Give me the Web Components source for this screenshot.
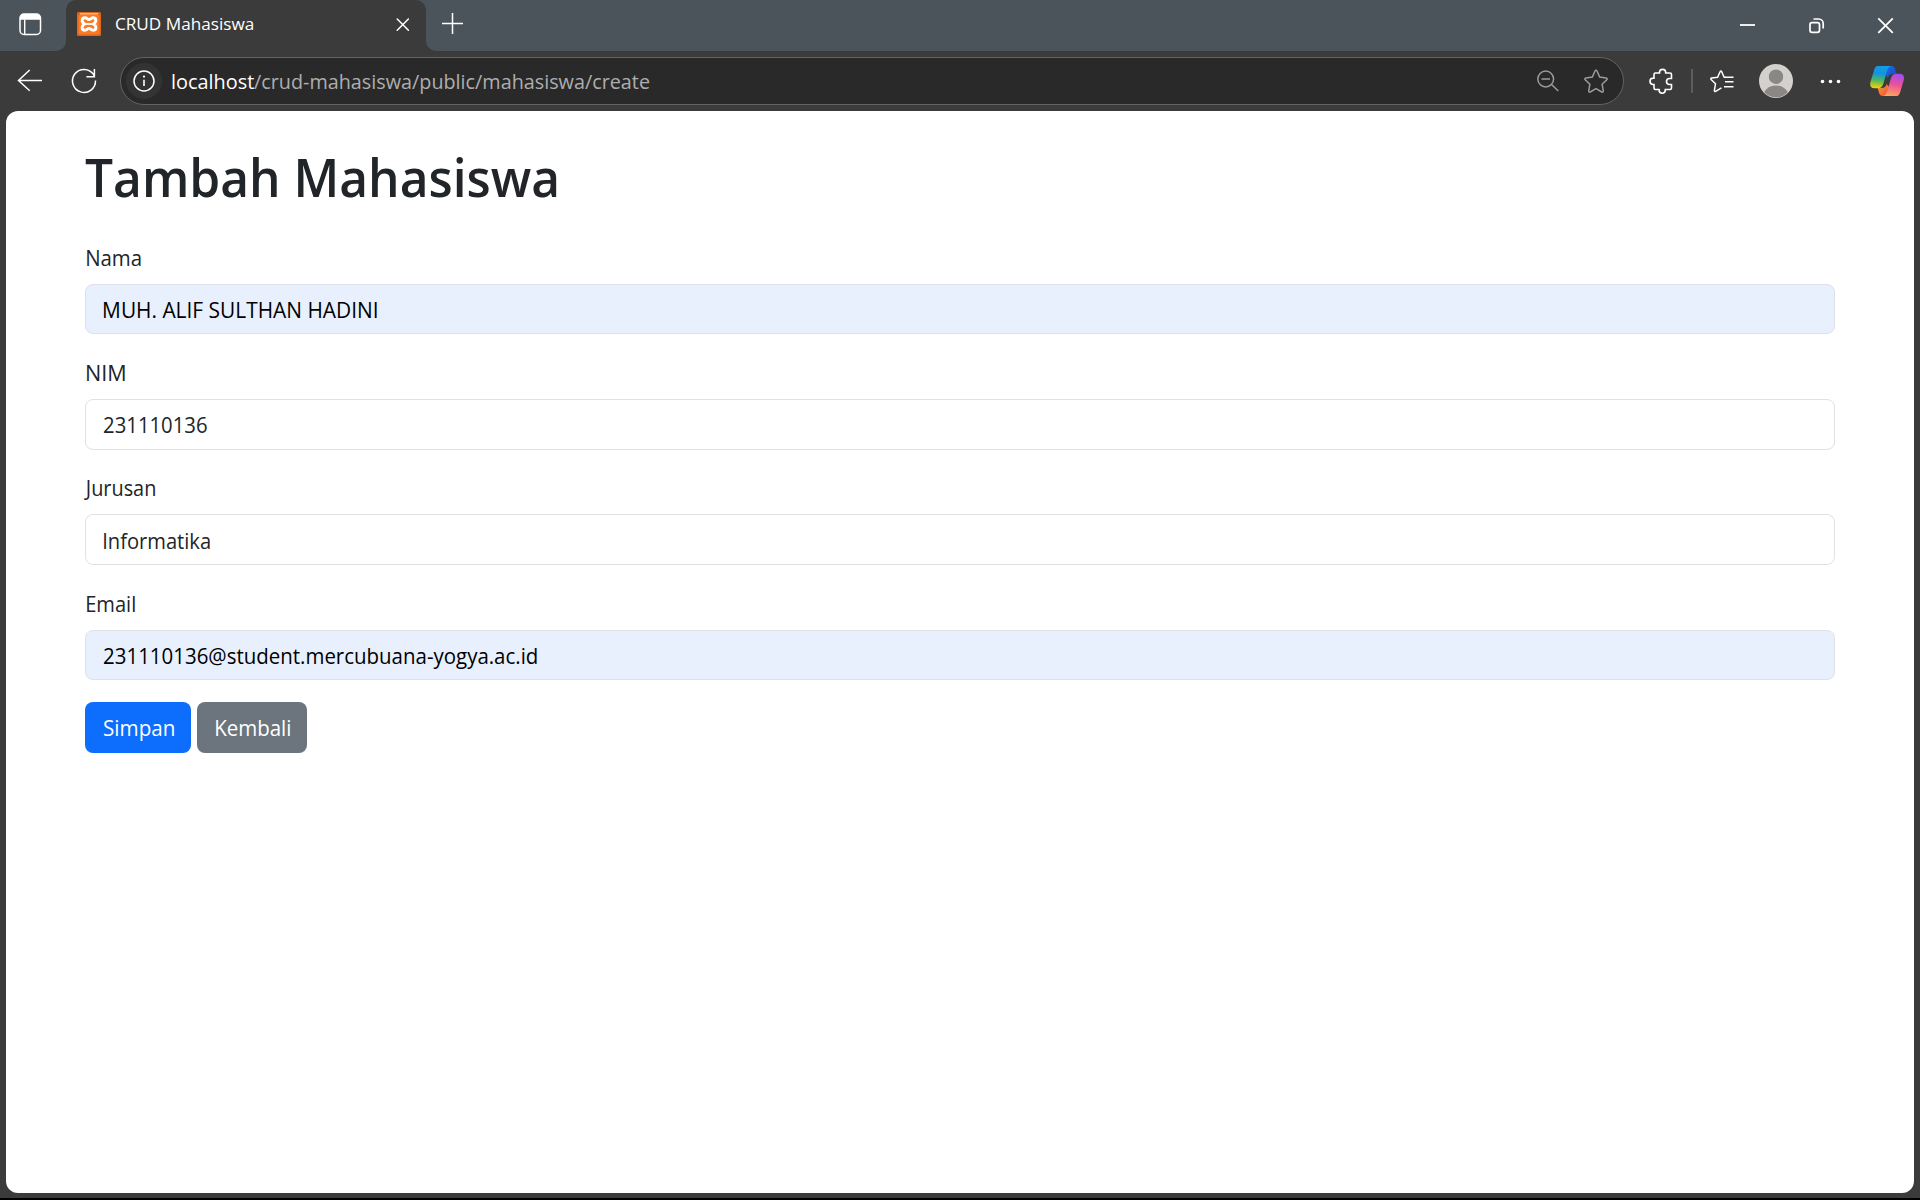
<!DOCTYPE html>
<html lang="id">
<head>
<meta charset="utf-8">
<title>CRUD Mahasiswa</title>
<style>
html,body{margin:0;height:100%;overflow:hidden;background:#000;font-family:"Open Sans","Noto Sans",sans-serif}
</style>
</head>
<body>
<browser-window></browser-window>
<script>
const ICONS = {
  tabs: [61,51,`<rect x="20" y="14" width="20.500" height="20.500" rx="4" fill="none" stroke="#fff" stroke-width="1.500"/><path d="M20 19.800v-1.800a4 4 0 0 1 4-4h12.500a4 4 0 0 1 4 4v1.800z" fill="#fff"/><path d="M24.700 19.500v15" stroke="#fff" stroke-width="1.400"/>`],
  xampp: [24,24,`<rect width="24" height="24" rx="1.500" fill="#e0661a"/><rect x="1.500" y="2.500" width="21" height="20" rx="2" fill="#fb7a24"/><path d="M3 1.800h18" stroke="#ffc79a" stroke-width="1.200"/><path d="M7.800 12C4.200 10.500 4.200 5.800 8 5.800c2 0 2.600 1.800 4 1.800s2-1.800 4-1.800c3.800 0 3.800 4.700.2 6.200c3.600 1.500 3.600 6.200-.2 6.200c-2 0-2.600-1.800-4-1.800s-2 1.800-4 1.800C4.200 18.200 4.200 13.500 7.800 12z" fill="none" stroke="#fff" stroke-width="2.900" stroke-linejoin="round"/><path d="M8.500 12h7" stroke="#fff" stroke-width="1.800"/>`],
  tabclose: [24,24,`<path d="M7.200 7l11.200 11.200M18.400 7L7.200 18.200" stroke="#fff" stroke-width="1.500" stroke-linecap="round"/>`],
  plus: [48,51,`<path d="M14 23.500h21M24.500 13v21" stroke="#fff" stroke-width="1.500"/>`],
  min: [69,51,`<path d="M27 25h15" stroke="#fff" stroke-width="1.800"/>`],
  restore: [69,51,`<rect x="28" y="22.700" width="9.500" height="9.600" rx="2" fill="none" stroke="#fff" stroke-width="1.700"/><path d="M31.500 19h5.200a4.500 4.500 0 0 1 4.500 4.500v5" fill="none" stroke="#fff" stroke-width="1.700"/>`],
  close: [69,51,`<path d="M27.300 18.300l14.500 14.500M41.800 18.300L27.300 32.800" stroke="#fff" stroke-width="1.800"/>`],
  back: [60,48,`<path d="M42 23.500H18.500M29.700 13L18.500 23.500L29.700 33.800" fill="none" stroke="#fff" stroke-width="1.500"/>`],
  reload: [48,48,`<path d="M35.500 23.500A11.500 11.500 0 1 1 33.500 17.400L34.500 19.500M34.400 12v7.800h-8" fill="none" stroke="#fff" stroke-width="1.500"/>`],
  info: [36,36,`<circle cx="18" cy="18" r="18" fill="#333"/><circle cx="18" cy="18" r="10" fill="none" stroke="#fff" stroke-width="1.500"/><path d="M18 16.800v6.200" stroke="#fff" stroke-width="1.600"/><circle cx="18" cy="13.600" r="1.100" fill="#fff"/>`],
  zoomout: [48,48,`<circle cx="22.700" cy="22" r="7.900" fill="none" stroke="#9b9b9b" stroke-width="1.500"/><path d="M18.500 22h8.500M28.500 27.500l6.800 6.500" stroke="#9b9b9b" stroke-width="1.500"/>`],
  star: [48,48,`<path transform="translate(1 0)" d="M24 13.300c.5 0 .8.200 1 .7l2.700 6 6.500.9c1 .2 1.300 1.100.6 1.800l-4.700 4.500 1.200 6.700c.1.900-.7 1.500-1.500 1.100L24 31.700l-5.800 3.300c-.8.400-1.600-.2-1.500-1.100l1.200-6.700-4.700-4.500c-.7-.7-.4-1.600.6-1.800l6.500-.9 2.700-6c.2-.5.500-.7 1-.7z" fill="none" stroke="#9b9b9b" stroke-width="1.500"/>`],
  puzzle: [48,48,`<path transform="translate(.5 0)" d="M16 16h5v-.5a3.100 3.100 0 0 1 6.200 0v.5H31.500a1.500 1.500 0 0 1 1.500 1.500v4H31a3 3 0 0 0 0 6h2V31a1.500 1.500 0 0 1-1.500 1.500h-4.700v.6a3.100 3.100 0 0 1-6.200 0v-.6H17A1.500 1.500 0 0 1 15.500 31v-3.500h-.8a3.200 3.200 0 0 1 0-6.400h.8V17.500A1.500 1.500 0 0 1 17 16z" fill="none" stroke="#fff" stroke-width="1.600"/>`],
  favs: [48,48,`<g transform="translate(1 0)"><path d="M26.800 20.500l-1.700-.3-2.500-5.700c-.3-.7-1.100-.7-1.400 0l-2.600 5.700-6 .8c-.8.100-1.100 1-.5 1.500l4.400 4.300-1.100 6.600c-.1.800.6 1.300 1.300.9l5.700-3.400" fill="none" stroke="#fff" stroke-width="1.500"/><path d="M25 20.300h9.500M26 24.800h8.500M25 29.700h9.500" stroke="#fff" stroke-width="1.500"/></g>`],
  avatar: [48,48,`<defs><clipPath id="c"><circle cx="24" cy="24" r="16.300"/></clipPath></defs><circle cx="24" cy="24" r="17" fill="#d3d1ce"/><g clip-path="url(#c)" fill="#8b8784"><circle cx="24" cy="19.700" r="7.200"/><ellipse cx="24" cy="39.500" rx="12.800" ry="11"/></g>`],
  dots: [48,48,`<g fill="#fff"><circle cx="16.500" cy="24.500" r="1.800"/><circle cx="24.500" cy="24.500" r="1.800"/><circle cx="32.500" cy="24.500" r="1.800"/></g>`],
  copilot: [48,48,`<defs>
<linearGradient id="a" x1=".5" y1="0" x2=".4" y2="1"><stop offset="0" stop-color="#159be8"/><stop offset=".35" stop-color="#1593dc"/><stop offset=".65" stop-color="#4fb75e"/><stop offset="1" stop-color="#f7cf0a"/></linearGradient>
<linearGradient id="b" x1=".6" y1="0" x2=".4" y2="1"><stop offset="0" stop-color="#a34df0"/><stop offset=".45" stop-color="#ea4f9b"/><stop offset="1" stop-color="#ffa35a"/></linearGradient>
<linearGradient id="d" x1="0" y1="0" x2="1" y2="1"><stop offset="0" stop-color="#1b70e8"/><stop offset="1" stop-color="#1746c4"/></linearGradient>
<linearGradient id="e" x1="0" y1="0" x2="1" y2="1"><stop offset="0" stop-color="#f9a030"/><stop offset="1" stop-color="#f0483a"/></linearGradient></defs>
<path d="M22 9h6.500c2 0 3 1 3.600 3l1.400 5h-3.500c-3 0-4.500 1.500-5.300 4L22 17z" fill="url(#d)"/>
<path d="M26.500 39h-6.800c-2 0-3-1-3.600-3l-1.400-5h3.800c3 0 4.400-1.600 5.200-4l3 4z" fill="url(#e)"/>
<path d="M14.500 9h14c-2.500.5-3.600 2.200-4.400 4.800l-3.700 12.700c-.9 3-2.300 4.700-5.500 4.700h-3.700c-3.500 0-4.700-3-3.700-6.500l3.500-11.200C11.800 10.700 12.800 9 14.500 9z" fill="url(#a)"/>
<path d="M33.800 39h-14c2.500-.5 3.600-2.200 4.400-4.800l3.700-12.700c.9-3 2.300-4.700 5.500-4.700H37c3.500 0 4.700 3 3.700 6.500l-3.300 11.200c-.9 2.800-1.900 4.500-3.600 4.500z" fill="url(#b)"/>`]
};

function define(name, html, after) {
  const t = document.createElement('template');
  t.innerHTML = html;
  customElements.define(name, class extends HTMLElement {
    connectedCallback() {
      if (this.shadowRoot) return;
      this.attachShadow({mode: 'open'}).append(t.content.cloneNode(true));
      if (after) after(this, this.shadowRoot);
    }
  });
}

define('ui-icon', `<style>:host{display:block;flex:none}svg{display:block}</style>`, (el, root) => {
  const [w, h, body] = ICONS[el.getAttribute('name')];
  root.innerHTML += `<svg width="${w}" height="${h}" viewBox="0 0 ${w} ${h}">${body}</svg>`;
});

/* One line of text whose drawn width is set by the "width" attribute. */
define('fit-text', `<style>:host{display:block;flex:none;white-space:pre}span{display:inline-block;transform-origin:0 50%}</style><span><slot></slot></span>`, (el, root) => {
  const w = parseFloat(el.getAttribute('width'));
  el.style.width = w + 'px';
  const cs = getComputedStyle(el);
  const ctx = document.createElement('canvas').getContext('2d');
  ctx.font = `${cs.fontWeight} ${cs.fontSize} ${cs.fontFamily}`;
  const m = ctx.measureText(el.textContent);
  const ink = m.actualBoundingBoxRight + m.actualBoundingBoxLeft;
  const s = w / ink;
  root.querySelector('span').style.transform = `translateX(${(m.actualBoundingBoxLeft * s).toFixed(2)}px) scaleX(${s.toFixed(4)})`;
});

define('tab-strip', `<style>
:host{display:flex;height:51px;background:#4c545b;color:#fff}
.ws{width:66px;box-sizing:border-box;background:#4c545b;border-bottom-right-radius:10px;}
.under{background:#3b3b3b;display:flex}
.tab{width:360px;height:51px;box-sizing:border-box;background:#3b3b3b;border-radius:10px 10px 0 0;display:flex;align-items:flex-start;padding:12px 12px 0 11px}
.mid{background:#4c545b}
fit-text{font-size:16.500px;line-height:24px;margin:0 0 0 15px}
.x{margin-left:auto}
.rest{flex:1;display:flex;background:#4c545b;border-bottom-left-radius:10px;padding-left:2px}
.sp{flex:1}
</style>
<div class="under"><div class="ws"><ui-icon name="tabs"></ui-icon></div></div>
<div class="mid"><div class="tab"><ui-icon name="xampp"></ui-icon><fit-text width="137">CRUD Mahasiswa</fit-text><ui-icon class="x" name="tabclose"></ui-icon></div></div>
<div class="under" style="flex:1"><div class="rest"><ui-icon name="plus"></ui-icon><div class="sp"></div><ui-icon name="min"></ui-icon><ui-icon name="restore"></ui-icon><ui-icon name="close"></ui-icon></div></div>`);

define('address-bar', `<style>
:host{display:flex;align-items:center;box-sizing:border-box;width:1504px;height:48px;border:1.500px solid #636363;border-radius:24px;background:#292929;padding:0 4px 0 5px}
fit-text{font-size:20.500px;line-height:46px;height:46px}
.host{color:#fff;margin-left:9.500px}.path{color:#aeaeae;margin-left:.500px}
.sp{flex:1}
</style><ui-icon name="info"></ui-icon><fit-text class="host" width="82">localhost</fit-text><fit-text class="path" width="395.500">/crud-mahasiswa/public/mahasiswa/create</fit-text><div class="sp"></div><ui-icon name="zoomout"></ui-icon><ui-icon name="star"></ui-icon>`);

define('tool-bar', `<style>
:host{display:flex;height:60px;box-sizing:border-box;padding-top:6px;background:#3b3b3b;align-items:flex-start}
.div{width:2px;height:24px;background:#5c5c5c;margin:12px 5px 0}
</style><ui-icon name="back"></ui-icon><ui-icon name="reload"></ui-icon><address-bar style="margin:0 14px 0 12px"></address-bar><ui-icon name="puzzle"></ui-icon><div class="div"></div><ui-icon name="favs"></ui-icon><ui-icon name="avatar" style="margin-left:6px"></ui-icon><ui-icon name="dots" style="margin-left:6px"></ui-icon><ui-icon name="copilot" style="margin-left:9px"></ui-icon>`);

define('form-field', `<style>
:host{display:block;margin-bottom:21.800px;font-size:22px}
.label{height:33px;line-height:33px;margin-bottom:10px;padding-left:1.500px;color:#212529}
.box{box-sizing:border-box;height:50.400px;border:1px solid #dee2e6;border-radius:8px;padding:0 17.500px;line-height:49px;background:#fff;color:#212529}
:host([autofilled]) .box{background:#e8f0fe;color:#000}
</style><div class="label"><slot name="label"></slot></div><div class="box"><slot></slot></div>`);

define('form-button', `<style>
:host{display:flex;justify-content:center;box-sizing:border-box;height:51px;border-radius:8px;font-size:22px;line-height:51px;color:#fff;background:#0d6efd}
:host([secondary]){background:#6c757d}
</style><slot></slot>`);

define('student-form', `<style>
:host{display:block;flex:1;margin:0 6px;background:#fff;border-radius:12px;padding:33px 79px 0;box-sizing:border-box}
h1{margin:0 0 31px;padding-left:0;height:66px;line-height:66px;font-size:53px;font-weight:600;color:#212529}
.row{display:flex;gap:6px}
</style>
<h1><fit-text width="471.500">Tambah Mahasiswa</fit-text></h1>
<form-field autofilled><fit-text slot="label" width="54">Nama</fit-text><fit-text width="272.500">MUH. ALIF SULTHAN HADINI</fit-text></form-field>
<form-field><fit-text slot="label" width="38">NIM</fit-text><fit-text width="103">231110136</fit-text></form-field>
<form-field><fit-text slot="label" width="71" style="margin-left:-3px">Jurusan</fit-text><fit-text width="106" style="padding-top:.600px;margin-bottom:-.600px">Informatika</fit-text></form-field>
<form-field autofilled><fit-text slot="label" width="47.800">Email</fit-text><fit-text width="433">231110136@student.mercubuana-yogya.ac.id</fit-text></form-field>
<div class="row"><form-button style="width:106px"><fit-text width="70" style="margin-left:1px">Simpan</fit-text></form-button><form-button secondary style="width:110px"><fit-text width="74" style="margin-left:1px">Kembali</fit-text></form-button></div>`);

define('browser-window', `<style>
:host{display:flex;flex-direction:column;width:1920px;height:1198px;box-sizing:border-box;padding-bottom:5px;background:#3b3b3b}
</style><tab-strip></tab-strip><tool-bar></tool-bar><student-form></student-form>`);
</script>
</body>
</html>
